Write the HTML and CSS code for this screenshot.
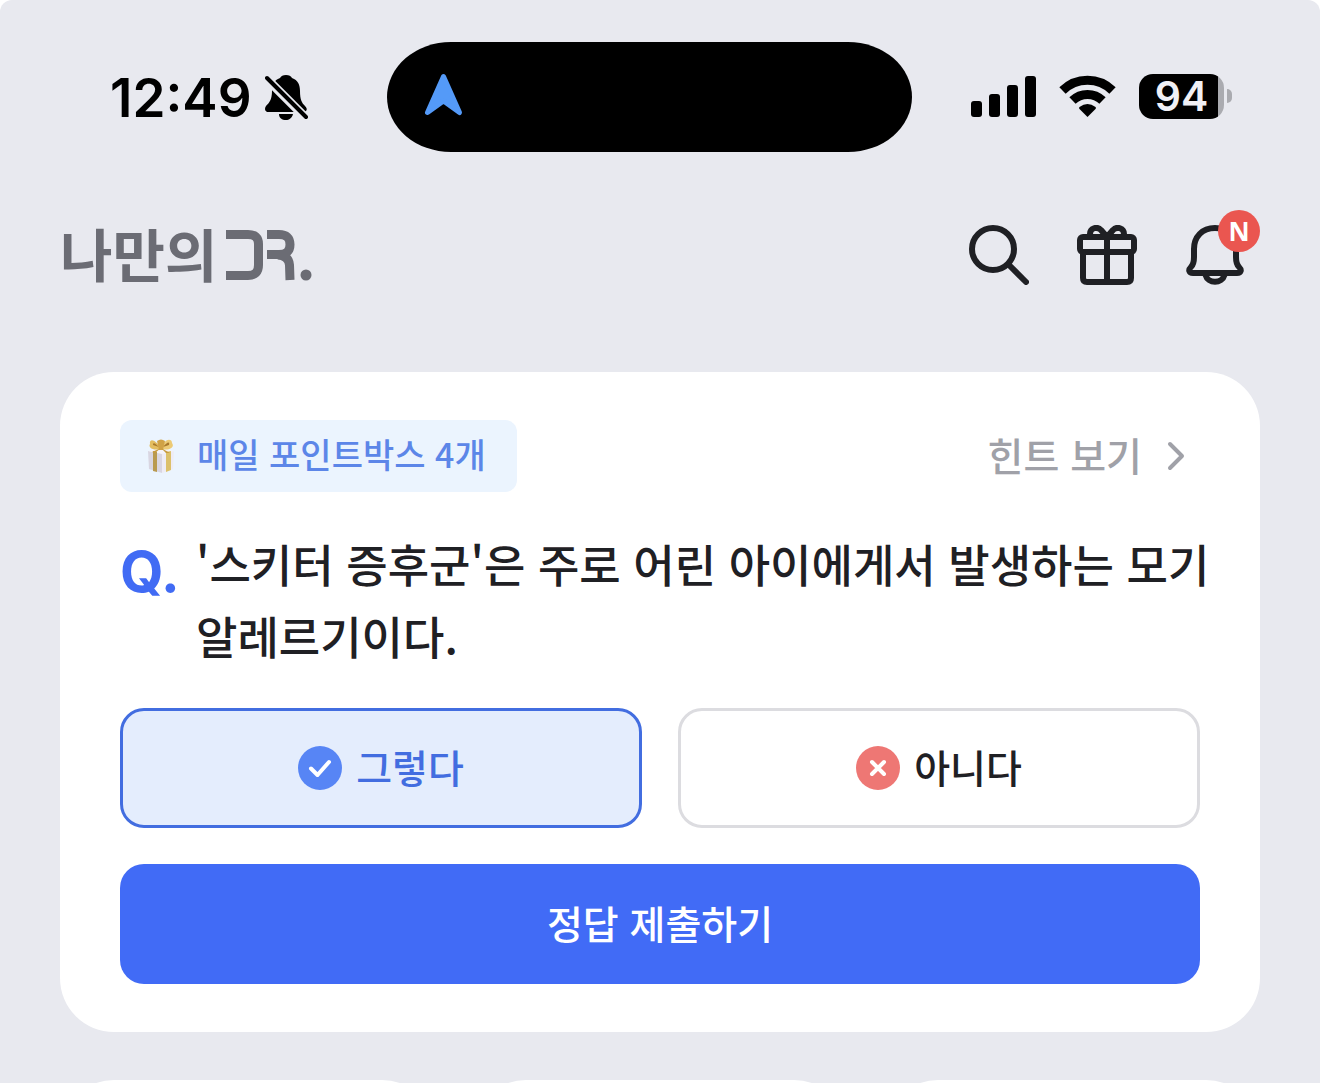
FILE: index.html
```html
<!DOCTYPE html>
<html lang="ko">
<head>
<meta charset="utf-8">
<meta name="viewport" content="width=device-width, initial-scale=1">
<title>나만의 DR.</title>
<link rel="stylesheet" href="styles.css">
</head>
<body>
<div class="app">
  <div class="status">
    <div class="status-left">
      <span class="time">12:49</span>
      <svg class="muted" width="44" height="48" viewBox="0 0 44 48" aria-hidden="true">
        <path d="M21 1C24 1 26 2 27 4C33 6 35 11 35 17C35 26 37 29 40 32C43 35 42 38 38 38H4C0 38 -1 35 1 32C4 29 7 26 7 17C7 11 9 6 15 4C16 2 18 1 21 1Z"/>
        <path d="M14 40H28C27 44 24 46 21 46C17 46 14 44 14 40Z"/>
        <path class="slash-gap" d="M-2 1L46 49"/>
        <path class="slash" d="M2 4L41 43"/>
      </svg>
    </div>
    <div class="island">
      <svg width="39" height="44" viewBox="0 0 39 44" aria-hidden="true">
        <path d="M19.500 3.500L3.500 39.500L19.500 28L35.500 39.500Z" fill="#549af8" stroke="#549af8" stroke-width="5" stroke-linejoin="round"/>
      </svg>
    </div>
    <div class="status-right">
      <svg width="66" height="42" viewBox="0 0 66 42" aria-hidden="true">
        <rect x="0" y="26" width="11" height="16" rx="3"/>
        <rect x="18" y="19" width="11" height="23" rx="3"/>
        <rect x="36" y="10" width="11" height="32" rx="3"/>
        <rect x="54" y="1" width="11" height="41" rx="3"/>
      </svg>
      <svg width="58" height="42" viewBox="0 0 58 42" aria-hidden="true">
        <path class="wave" d="M3.500 15.500A35.500 35.500 0 0 1 53.500 15.500"/>
        <path class="wave" d="M13.500 25.500A21.500 21.500 0 0 1 43.500 25.500"/>
        <path d="M28.500 42L20.500 34Q19.500 33 20.500 32Q28.500 26 36.500 32Q37.500 33 36.500 34Z"/>
      </svg>
      <div class="battery"><span class="level">94</span><span class="nub"></span></div>
    </div>
  </div>

  <header class="header">
    <a class="logo" href="#" aria-label="나만의 DR.">
      <span>나만의</span>
      <svg width="90" height="56" viewBox="0 0 90 56" aria-hidden="true">
        <path class="mark" d="M2 7.500H24Q34.500 7.500 34.500 17V38Q34.500 48.500 24 48.500H2"/>
        <path class="mark" d="M43 7.500H55Q66 7.500 66 17.500Q66 27.500 55 27.500H43M54 28Q65 29 65.500 38L66 53"/>
        <circle cx="82" cy="48" r="5.500"/>
      </svg>
    </a>
    <nav class="actions">
      <button class="icon-btn" aria-label="검색">
        <svg width="60" height="60" viewBox="0 0 60 60"><circle cx="24" cy="24" r="21"/><path d="M40 40L57 57"/></svg>
      </button>
      <button class="icon-btn" aria-label="선물">
        <svg width="60" height="60" viewBox="0 0 60 60"><rect x="3" y="12" width="54" height="15" rx="3"/><path d="M6 28V53Q6 57 10 57H50Q54 57 54 53V28M30 12V57M30 12L24 5C20 1 13 3 13 9V11M30 12L36 5C40 1 47 3 47 9V11"/></svg>
      </button>
      <button class="icon-btn" aria-label="알림">
        <svg width="60" height="60" viewBox="0 0 60 60"><path d="M30 3C17 3 9 12 9 24V32C9 38 8 40 6 42C3 45 4 48 8 48H52C56 48 57 45 54 42C52 40 51 38 51 32V24C51 12 43 3 30 3ZM20.500 50C23 59 37 59 39.500 50"/></svg>
        <span class="badge">N</span>
      </button>
    </nav>
  </header>

  <main class="content">
    <form class="quiz">
      <div class="quiz-top">
        <span class="tag">
          <svg width="28" height="36" viewBox="0 0 28 36" aria-hidden="true">
            <path d="M1 13L15 15V35L2 31Z" fill="#d9d6e2"/>
            <path d="M15 15L27 13L26 31L15 35Z" fill="#eeecf5"/>
            <path d="M1 13L13 10L27 13L15 16Z" fill="#f5f3f8"/>
            <path d="M6 13L10 14V34L6 33Z" fill="#b99a50"/>
            <path d="M19 14L24 13V32L19 34Z" fill="#dcc06a"/>
            <path d="M14 11C9 1 2 0 3 6C1 9 5 13 14 11Z" fill="#e3bd60"/>
            <path d="M14 11C17 0 25 0 25 5C28 9 23 13 14 11Z" fill="#ecca75"/>
            <path d="M12 9C8 5 6 4 6 7ZM16 9C20 4 23 3 22 7Z" fill="#a9792c"/>
            <path d="M10 3Q14 0 18 3L16 12H12Z" fill="#d0a246"/>
            <path d="M14 10L5 14L8 15ZM14 10L23 15L19 15Z" fill="#c79b3f"/>
          </svg>
          <span>매일 포인트박스 4개</span>
        </span>
        <button class="hint" type="button"><span>힌트 보기</span>
          <svg width="18" height="30" viewBox="0 0 18 30" aria-hidden="true"><path d="M3 3L15 15L3 27"/></svg>
        </button>
      </div>
      <div class="question">
        <span class="q">Q.</span>
        <p class="q-text">'스키터 증후군'은 주로 어린 아이에게서 발생하는 모기 알레르기이다.</p>
      </div>
      <div class="options">
        <label class="option">
          <input type="radio" name="answer" value="yes" checked>
          <svg width="44" height="44" viewBox="0 0 44 44" aria-hidden="true"><circle cx="22" cy="22" r="22" fill="#5785f5"/><path d="M13 22.500L19.500 29L31 16"/></svg>
          <span>그렇다</span>
        </label>
        <label class="option">
          <input type="radio" name="answer" value="no">
          <svg width="44" height="44" viewBox="0 0 44 44" aria-hidden="true"><circle cx="22" cy="22" r="22" fill="#ee7774"/><path d="M16 16L28 28M28 16L16 28"/></svg>
          <span>아니다</span>
        </label>
      </div>
      <button class="submit" type="submit">정답 제출하기</button>
    </form>
    <div class="tiles">
      <div class="tile"></div>
      <div class="tile"></div>
      <div class="tile"></div>
    </div>
  </main>
</div>
</body>
</html>
```
FILE: styles.css
```css
* { box-sizing: border-box; }
body {
  margin: 0;
  background: #fff;
  color: #1f2024;
  font-family: "Noto Sans CJK KR", "Noto Sans", sans-serif;
  font-weight: 500;
}
button {
  margin: 0;
  padding: 0;
  border: 0;
  background: none;
  color: inherit;
  font: inherit;
  cursor: pointer;
}
svg { display: block; flex: none; }

.app {
  display: flex;
  flex-direction: column;
  height: 100vh;
  overflow: hidden;
  background: #e8e9ef;
  border-radius: 12px 12px 0 0;
}

/* Status bar */
.status {
  flex: none;
  display: grid;
  grid-template-columns: 1fr auto 1fr;
  align-items: center;
  padding: 42px 88px 0 67px;
  color: #000;
  font-family: Inter, sans-serif;
}
.status-left {
  display: flex;
  align-items: center;
  gap: 13px;
  padding: 2px 0 0 43px;
}
.time { font-size: 53px; line-height: 64px; font-weight: 600; }
.slash-gap { stroke: #e8e9ef; stroke-width: 9; }
.slash { stroke: #000; stroke-width: 4; stroke-linecap: round; }
.island {
  display: flex;
  align-items: center;
  width: 525px;
  height: 110px;
  padding: 0 0 4px 37px;
  border-radius: 64px / 55px;
  background: #000;
}
.status-right {
  display: flex;
  align-items: center;
  justify-content: flex-end;
  gap: 22px;
  padding-bottom: 2px;
}
.wave { fill: none; stroke: #000; stroke-width: 9; }
.battery { display: flex; align-items: center; gap: 3px; }
.level {
  width: 85px;
  border-radius: 14px;
  background: linear-gradient(to right, #000 79px, #aaabb0 79px);
  color: #f0f0f5;
  font-size: 41px;
  line-height: 45px;
  font-weight: 600;
  text-align: center;
}
.nub { width: 5px; height: 14px; border-radius: 0 7px 7px 0; background: #aaabb0; }

/* Header */
.header {
  flex: none;
  display: flex;
  align-items: center;
  justify-content: space-between;
  margin-top: 73px;
  padding: 0 75px 0 60px;
}
.logo {
  display: flex;
  align-items: center;
  gap: 7px;
  color: #6b6c74;
  font-size: 57px;
  line-height: 54px;
  font-weight: 700;
  text-decoration: none;
}
.logo span { padding-bottom: 6px; }
.logo circle { fill: currentColor; }
.mark { fill: none; stroke: currentColor; stroke-width: 9; }
.actions { display: flex; gap: 48px; }
.icon-btn { position: relative; }
.icon-btn svg {
  fill: none;
  stroke: #1f2024;
  stroke-width: 6;
  stroke-linecap: round;
  stroke-linejoin: round;
}
.badge {
  position: absolute;
  top: -15px;
  right: -15px;
  width: 42px;
  border-radius: 50%;
  background: #ea5650;
  color: #fff;
  font-family: "Open Sans", sans-serif;
  font-size: 26px;
  line-height: 42px;
  font-weight: 700;
  text-align: center;
}

/* Quiz card */
.content {
  flex: 1;
  min-height: 0;
  display: flex;
  flex-direction: column;
  gap: 48px;
  margin-top: 87px;
  padding: 0 60px;
}
.quiz {
  flex: none;
  display: flex;
  flex-direction: column;
  gap: 36px;
  padding: 48px 60px;
  border-radius: 54px;
  background: #fff;
}
.quiz-top { display: flex; align-items: center; justify-content: space-between; }
.tag {
  display: flex;
  align-items: center;
  gap: 22px;
  padding: 0 31px 0 27px;
  border-radius: 12px;
  background: #ebf4fe;
  color: #5c86e8;
  font-size: 34px;
  line-height: 68px;
}
.tag span { padding-bottom: 4px; }
.hint {
  display: flex;
  align-items: center;
  gap: 25px;
  padding-right: 15px;
  color: #a0a1a8;
  font-size: 39px;
  line-height: 60px;
}
.hint span { padding-bottom: 4px; }
.hint path {
  fill: none;
  stroke: currentColor;
  stroke-width: 4;
  stroke-linecap: round;
  stroke-linejoin: round;
}
.question { display: flex; margin-right: -16px; }
.q {
  flex: none;
  width: 76px;
  color: #416bf4;
  font-family: Inter, sans-serif;
  font-size: 56px;
  line-height: 88px;
  font-weight: 700;
}
.q-text { margin: 0; font-size: 45px; line-height: 72px; word-break: keep-all; }
.options { display: grid; grid-template-columns: 1fr 1fr; gap: 36px; }
.option {
  position: relative;
  display: flex;
  align-items: center;
  justify-content: center;
  gap: 14px;
  border: 3px solid #dcdce0;
  border-radius: 24px;
  font-size: 39px;
  line-height: 110px;
  cursor: pointer;
}
.option span { padding-bottom: 4px; }
.option:has(input:checked) {
  border-color: #426de0;
  background: #e4edfd;
  color: #426de0;
}
.option input {
  position: absolute;
  inset: 0;
  width: 100%;
  height: 100%;
  margin: 0;
  opacity: 0;
}
.option path {
  fill: none;
  stroke: #fff;
  stroke-width: 4;
  stroke-linecap: round;
  stroke-linejoin: round;
}
.submit {
  padding-bottom: 4px;
  border-radius: 24px;
  background: #416bf6;
  color: #fff;
  font-size: 39px;
  line-height: 116px;
}

/* Tiles below the card */
.tiles { flex: none; display: grid; grid-template-columns: repeat(3, 1fr); gap: 36px; }
.tile { min-height: 376px; border-radius: 54px; background: #fff; }
```
